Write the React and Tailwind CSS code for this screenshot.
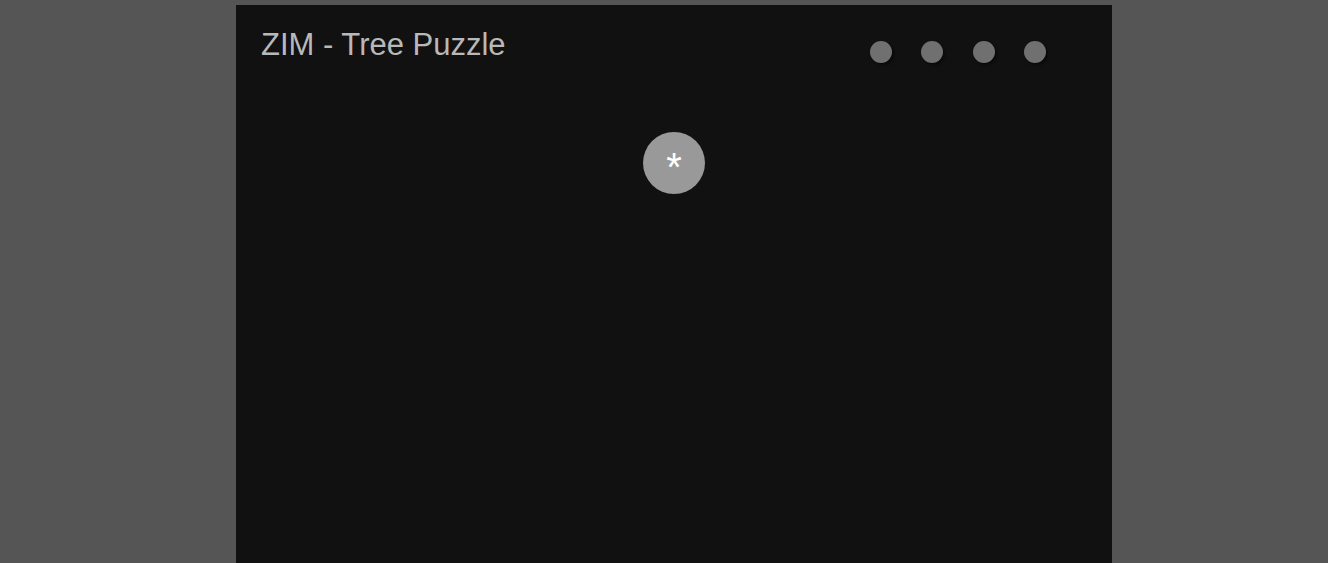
import React from 'react';

const dots = [0, 1, 2, 3];

export default function App() {
  return (
    <div className="w-full h-[563px] bg-[#555555] overflow-hidden" style={{ fontFamily: '"Liberation Sans", Arial, sans-serif' }}>
      <div className="relative ml-[236px] mt-[5px] w-[876px] h-[700px] bg-[#111111]">
        {/* title */}
        <div className="absolute left-[25px] top-[24px] text-[31px] leading-[31px] text-[#b9b9b9]">
          ZIM - Tree Puzzle
        </div>

        {/* level dots */}
        <div className="absolute left-[634px] top-[36px] flex gap-[29.3px]">
          {dots.map(i => (
            <div key={i} className="w-[22px] h-[22px] rounded-full bg-[#707070] shadow-[2px_2px_3px_rgba(0,0,0,0.45)]" />
          ))}
        </div>

        {/* root node */}
        <div className="absolute left-[407px] top-[127px] w-[62px] h-[62px] rounded-full bg-[#999999] flex items-center justify-center">
          <span className="text-[40px] leading-[40px] text-white translate-y-[4px]">*</span>
        </div>
      </div>
    </div>
  );
}
